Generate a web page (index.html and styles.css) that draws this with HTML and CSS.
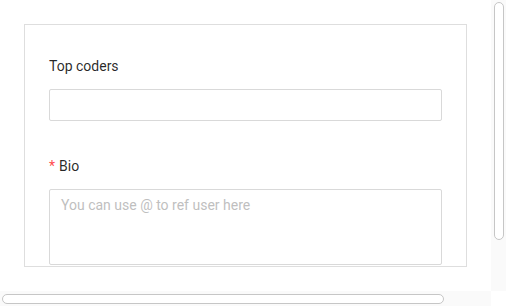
FILE: index.html
```html
<!DOCTYPE html>
<html>
    <head>
        <title> Profile form </title>
        <link rel="stylesheet" href="styles.css">
    </head>
    <body>
        <div class="frame">
            <div class="viewport">
                <form class="card">
                    <div class="form-item">
                        <label class="label" for="coders">Top coders</label>
                        <input class="input" id="coders" type="text">
                    </div>
                    <div class="form-item">
                        <label class="label" for="bio"><span class="required">*</span>Bio</label>
                        <textarea class="input textarea" id="bio" placeholder="You can use @ to ref user here"></textarea>
                    </div>
                </form>
            </div>
            <div class="scrollbar vertical"><div class="thumb"></div></div>
            <div class="scrollbar horizontal"><div class="thumb"></div></div>
            <div class="corner"></div>
        </div>
    </body>
</html>
```
FILE: styles.css
```css
body {
    margin: 0;
    font-family: Roboto, "Liberation Sans", sans-serif;
    background-color: #ffffff;
}

.frame {
    display: grid;
    grid-template-columns: 491px 15px;
    grid-template-rows: 291px 15px;
    width: 506px;
    height: 306px;
}

.viewport {
    overflow: hidden;
    padding: 24px 0 0 24px;
    box-sizing: border-box;
}

/* fake scrollbars, the page is scrolled inside a frame */
.scrollbar {
    background-color: #fafafa;
    box-sizing: border-box;
}
.thumb {
    background-color: #ffffff;
    border: 1px solid #c6c6c6;
    border-radius: 5px;
    box-sizing: border-box;
}
.vertical {
    padding: 2px 2px 0 3px;
}
.vertical .thumb {
    width: 10px;
    height: 238px;
}
.horizontal {
    padding: 3px 0 0 2px;
}
.horizontal .thumb {
    width: 442px;
    height: 10px;
}
.corner {
    background-color: #ffffff;
}

.card {
    width: 443px;
    height: 243px;
    padding: 30px 24px 0 24px;
    box-sizing: border-box;
    border: 1px solid #dedede;
    overflow: hidden;
}

.form-item {
    display: flex;
    flex-direction: column;
    margin-bottom: 34px;
}

.label {
    font-size: 14px;
    line-height: 22px;
    color: rgba(0, 0, 0, 0.85);
    margin-bottom: 12px;
}

.required {
    color: #ff4d4f;
    margin-right: 4px;
    font-size: 14px;
}

.input {
    width: 100%;
    height: 32px;
    padding: 4px 11px;
    box-sizing: border-box;
    border: 1px solid #d9d9d9;
    border-radius: 2px;
    font-family: Roboto, "Liberation Sans", sans-serif;
    font-size: 14px;
    line-height: 22px;
    color: rgba(0, 0, 0, 0.85);
    outline: none;
}

.textarea {
    height: 76px;
    resize: none;
}

.textarea::placeholder {
    color: #bfbfbf;
}
```
